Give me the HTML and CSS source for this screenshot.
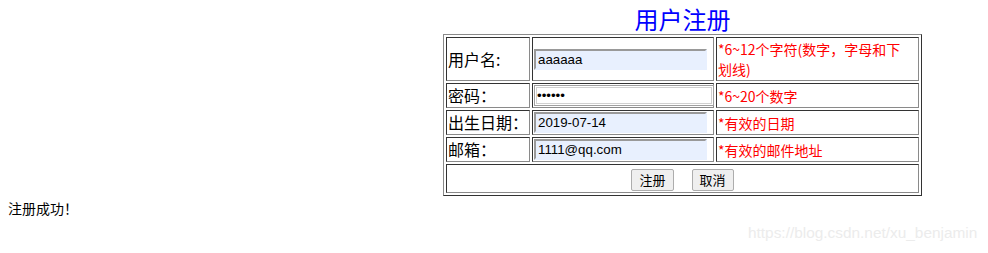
FILE: index.html
```html
<!DOCTYPE html>
<html>
<head>
<meta charset="utf-8">
<link rel="stylesheet" href="styles.css">
</head>
<body>
<div class="wrap">
  <h1 class="title">用户注册</h1>
  <table class="reg">
    <tr>
      <td class="lbl lbl-tall">用户名:</td>
      <td class="fld"><input class="inp auto" type="text" value="aaaaaa"></td>
      <td class="tip">*6~12个字符(数字，字母和下划线)</td>
    </tr>
    <tr>
      <td class="lbl">密码：</td>
      <td class="fld"><input class="inp pwd" type="password" value="123456"></td>
      <td class="tip">*6~20个数字</td>
    </tr>
    <tr>
      <td class="lbl">出生日期：</td>
      <td class="fld"><input class="inp auto" type="text" value="2019-07-14"></td>
      <td class="tip">*有效的日期</td>
    </tr>
    <tr>
      <td class="lbl">邮箱：</td>
      <td class="fld"><input class="inp auto" type="text" value="1111@qq.com"></td>
      <td class="tip">*有效的邮件地址</td>
    </tr>
    <tr>
      <td class="btns" colspan="3"><button class="btn">注册</button><button class="btn">取消</button></td>
    </tr>
  </table>
</div>
<p class="msg">注册成功！</p>
<div class="mark">https://blog.csdn.net/xu_benjamin</div>
</body>
</html>
```

FILE: styles.css
```css
html, body {
  margin: 0;
  padding: 0;
  background: #fff;
}
body {
  font-family: "Noto Sans CJK SC", "Liberation Sans", sans-serif;
  color: #000;
  width: 988px;
  height: 253px;
  position: relative;
  overflow: hidden;
}
.wrap {
  margin-left: 443px;
  width: 479px;
  padding-top: 4px;
}
.title {
  margin: 0;
  height: 30px;
  font-size: 24px;
  font-weight: normal;
  line-height: 30px;
  text-align: center;
  color: #0000ff;
}
.reg {
  width: 479px;
  border-collapse: separate;
  border-spacing: 2px;
  border-style: solid;
  border-width: 1px;
  border-color: #8a8a8a #333 #333 #8a8a8a;
  table-layout: fixed;
}
.reg td {
  border-style: solid;
  border-width: 1px;
  border-color: #333 #8a8a8a #8a8a8a #333;
  padding: 1px;
  vertical-align: middle;
}
.lbl {
  width: 80px;
  font-size: 16px;
  line-height: 21px;
  height: 21px;
}
.lbl-tall {
  height: 40px;
}
.fld {
  width: 178px;
}
.reg td.tip {
  font-size: 14px;
  line-height: 20px;
  color: #ff0000;
  padding-right: 10px;
}
.inp {
  box-sizing: border-box;
  display: block;
  margin: 0;
  font-family: "Liberation Sans", Arial, sans-serif;
  font-size: 13.3px;
  color: #000;
  padding: 1px 2px;
  height: 21px;
  outline: none;
}
.auto {
  width: 173px;
  background: #e8f0fe;
  border-style: solid;
  border-width: 2px;
  border-color: #999 #e8f0fe #e8f0fe #999;
}
.pwd {
  width: 180px;
  background: #fff;
  border: 1px solid #a0a0a0;
  box-shadow: inset 0 0 0 1px #fff, inset 0 0 0 2px #d0d0d0;
}
.btns {
  height: 25px;
  text-align: center;
}
.btn {
  font-family: "Noto Sans CJK SC", sans-serif;
  font-size: 13px;
  line-height: 17px;
  height: 22px;
  padding: 0 7px;
  margin: 0 9px;
  background: #efefef;
  border: 1px solid #adadad;
  border-radius: 2px;
  color: #000;
}
.msg {
  margin: 0;
  padding-left: 8px;
  padding-top: 3px;
  font-size: 14px;
  line-height: 18px;
}
.mark {
  position: absolute;
  left: 748px;
  top: 224px;
  font-family: "Liberation Sans", Arial, sans-serif;
  font-size: 15.4px;
  color: #ececec;
}
```
